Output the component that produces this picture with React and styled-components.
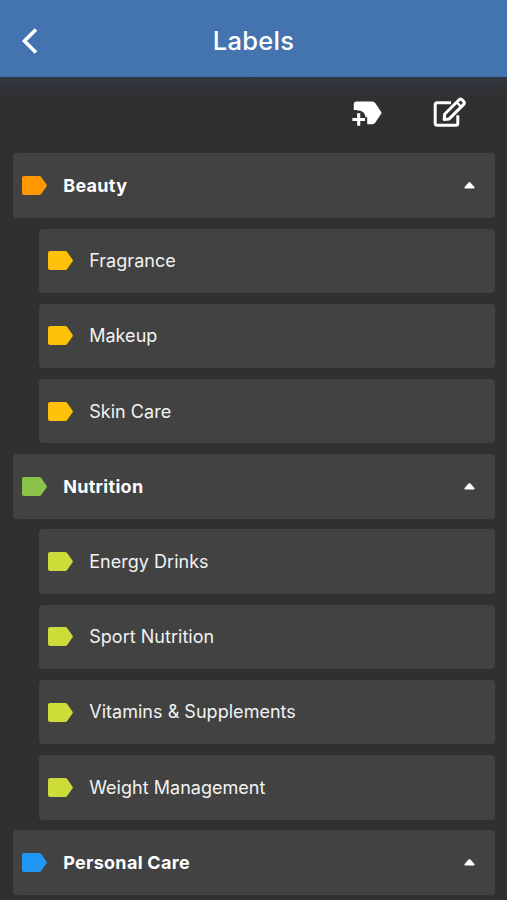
import React from "react";
import styled, { createGlobalStyle } from "styled-components";

const GlobalStyle = createGlobalStyle`
  * { box-sizing: border-box; }
  html, body { margin: 0; background: #303030; overflow: hidden; }
`;

const Screen = styled.div`
  display: flex;
  flex-direction: column;
  height: 900px;
  overflow: hidden;
  background: #303030;
  color: #fff;
  font-family: Inter, "Liberation Sans", sans-serif;
`;

const Header = styled.header`
  display: grid;
  grid-template-columns: 60px 1fr 60px;
  align-items: center;
  flex: none;
  height: 77px;
  padding-top: 4px;
  background: #4474b0;
`;

const BackButton = styled.button`
  display: flex;
  padding: 0 0 0 21px;
  border: 0;
  background: none;
  color: inherit;
`;

const Title = styled.h1`
  margin: 0;
  text-align: center;
  font-size: 25.5px;
  font-weight: 500;
  line-height: 32px;
  letter-spacing: 0.3px;
`;

const Toolbar = styled.div`
  display: flex;
  flex: none;
  justify-content: flex-end;
  gap: 51px;
  height: 76.3px;
  padding: 20px 41px 0 0;
  background: linear-gradient(#323944, #303337 10px, #303030 22px);
`;

const ToolButton = styled.button`
  display: flex;
  align-items: flex-end;
  height: 30px;
  padding: 0;
  border: 0;
  background: none;
  color: inherit;
`;

const List = styled.ul`
  display: flex;
  flex-direction: column;
  flex: none;
  gap: 10.73px;
  margin: 0;
  padding: 0 12px 0 12.5px;
  list-style: none;
`;

const Row = styled.li`
  display: flex;
  align-items: center;
  height: 64.5px;
  margin-left: ${(p) => (p.$child ? "26px" : "0")};
  padding: 0 20px 0 9.7px;
  border-radius: 4px;
  background: #424242;
`;

const Name = styled.span`
  flex: 1;
  margin-left: 16px;
  padding-top: 0.6px;
  color: ${(p) => (p.$child ? "#f2f2f2" : "#fff")};
  font-size: 18px;
  font-weight: ${(p) => (p.$child ? 400 : 700)};
  letter-spacing: ${(p) => (p.$child ? "0.03px" : "0.3px")};
  line-height: 24px;
`;

const TagIcon = ({ color }) => (
  <svg width="25" height="19" viewBox="0 0 25 19" fill={color}>
    <path d="M2 0H17Q18.4 0 19.2 1.1L24.6 8.8Q25 9.5 24.6 10.2L19.2 17.9Q18.4 19 17 19H2Q0 19 0 17V2Q0 0 2 0Z" />
  </svg>
);

const AddTagIcon = () => (
  <svg width="30" height="26" viewBox="0 0 30 26" fill="currentColor">
    <path d="M1.8 8.9V3.2Q1.8 0.5 4.5 0.5H20.3Q22.2 0.5 23.2 2L29.2 10.9Q29.8 11.8 29.2 12.8L23.2 21.8Q22.2 23.2 20.3 23.2H15.2V16.2H13.6Q12.6 10.2 7.2 9.6H5V8.9Z" />
    <path d="M6.7 12.2V24.8M0.4 18.5H13" fill="none" stroke="currentColor" strokeWidth="3.1" />
  </svg>
);

const EditIcon = () => (
  <svg width="33" height="30" viewBox="0 0 33 30" fill="none" stroke="currentColor" strokeWidth="3" strokeLinejoin="round">
    <path d="M18 5.8H4.2Q2.2 5.8 2.2 7.8V26.2Q2.2 28.2 4.2 28.2H22.8Q24.8 28.2 24.8 26.2V18.2" />
    <path d="M11.2 22.6L11.6 17.3L26.1 2.8Q27.6 1.4 29.1 2.8L30.7 4.4Q32 5.9 30.7 7.4L16.2 21.9Z" />
    <path d="M23.7 5.4L28.2 9.9" strokeWidth="2.4" />
  </svg>
);

const BackIcon = () => (
  <svg width="17" height="26" viewBox="0 0 17 26" fill="none" stroke="currentColor" strokeWidth="3.6">
    <path d="M15 1.4L3.4 13L15 24.6" />
  </svg>
);

const CollapseIcon = () => (
  <svg width="11" height="7" viewBox="0 0 11 7" fill="currentColor">
    <path d="M4.4 0.7Q5.5-0.5 6.6 0.7L10.4 5Q11 6.4 9.6 6.5H1.4Q0 6.4 0.6 5Z" />
  </svg>
);

const labels = [
  { name: "Beauty", color: "#ff9800" },
  { name: "Fragrance", color: "#ffc107", child: true },
  { name: "Makeup", color: "#ffc107", child: true },
  { name: "Skin Care", color: "#ffc107", child: true },
  { name: "Nutrition", color: "#8bc34a" },
  { name: "Energy Drinks", color: "#cddc39", child: true },
  { name: "Sport Nutrition", color: "#cddc39", child: true },
  { name: "Vitamins & Supplements", color: "#cddc39", child: true },
  { name: "Weight Management", color: "#cddc39", child: true },
  { name: "Personal Care", color: "#2196f3" },
];

export default function App() {
  return (
    <Screen>
      <GlobalStyle />
      <Header>
        <BackButton aria-label="Back"><BackIcon /></BackButton>
        <Title>Labels</Title>
      </Header>
      <Toolbar>
        <ToolButton aria-label="Add label"><AddTagIcon /></ToolButton>
        <ToolButton aria-label="Edit labels"><EditIcon /></ToolButton>
      </Toolbar>
      <List>
        {labels.map(({ name, color, child }) => (
          <Row key={name} $child={child}>
            <TagIcon color={color} />
            <Name $child={child}>{name}</Name>
            {!child && <CollapseIcon />}
          </Row>
        ))}
      </List>
    </Screen>
  );
}
